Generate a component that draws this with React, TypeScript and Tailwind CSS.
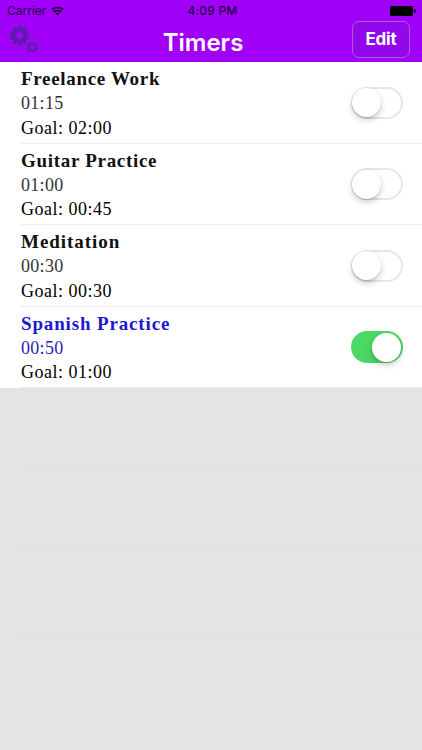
import React from "react";
import clsx from "clsx";

interface Timer {
  name: string;
  elapsed: string;
  goal: string;
  running: boolean;
  tracking: string;
}

const timers: Timer[] = [
  { name: "Freelance Work", elapsed: "01:15", goal: "02:00", running: false, tracking: "tracking-[0.68px]" },
  { name: "Guitar Practice", elapsed: "01:00", goal: "00:45", running: false, tracking: "tracking-[0.7px]" },
  { name: "Meditation", elapsed: "00:30", goal: "00:30", running: false, tracking: "tracking-[0.95px]" },
  { name: "Spanish Practice", elapsed: "00:50", goal: "01:00", running: true, tracking: "tracking-[0.85px]" },
];

// Toothed outline followed by the round hole, meant for the evenodd fill rule
const gearPath = (cx: number, cy: number, outer: number, inner: number, hole: number, teeth: number) => {
  const step = (Math.PI * 2) / teeth;
  const points: string[] = [];
  for (let i = 0; i < teeth; i++) {
    const mid = i * step - Math.PI / 2;
    [
      [inner, -0.32],
      [outer, -0.2],
      [outer, 0.2],
      [inner, 0.32],
    ].forEach(([r, offset]) => {
      const angle = mid + offset * step;
      points.push(`${(cx + r * Math.cos(angle)).toFixed(2)} ${(cy + r * Math.sin(angle)).toFixed(2)}`);
    });
  }
  return `M${points.join("L")}ZM${cx - hole} ${cy}a${hole} ${hole} 0 1 0 ${hole * 2} 0a${hole} ${hole} 0 1 0 ${-hole * 2} 0Z`;
};

const GearsIcon = () => (
  <svg width="32" height="32" viewBox="0 0 32 32" fill="#6415b3" stroke="#8a30c8" strokeWidth="0.35" fillRule="evenodd">
    <path d={gearPath(11.5, 11.5, 10.8, 8.3, 3.2, 10)} />
    <path d={gearPath(24.3, 23.3, 6.3, 4.9, 2, 10)} />
  </svg>
);

const WifiIcon = () => (
  <svg width="13" height="10" viewBox="0 0 13 10" fill="none" stroke="#24003d" strokeWidth="1.8">
    <path d="M0.8 3.7a8.2 8.2 0 0 1 11.4 0" />
    <path d="M2.8 6a5.3 5.3 0 0 1 7.4 0" />
    <path d="M6.5 9.6L4.4 7.5a3 3 0 0 1 4.2 0Z" fill="#24003d" stroke="none" />
  </svg>
);

const Toggle = ({ on }: { on: boolean }) => (
  <div
    className={clsx(
      "mt-px flex h-8 w-[52px] items-center rounded-full",
      on ? "justify-end bg-[#4bd864] px-[2px]" : "border-2 border-[#e6e6e6] bg-white"
    )}
  >
    <div
      className={clsx(
        "size-[29px] shrink-0 rounded-full bg-white",
        on ? "shadow-[0_3px_6px_rgba(0,0,0,0.22)]" : "-ml-px shadow-[0_3px_6px_rgba(0,0,0,0.2),0_1px_1px_rgba(0,0,0,0.14)]"
      )}
    />
  </div>
);

const TimerRow = ({ timer }: { timer: Timer }) => (
  <li className="h-[81.5px] bg-white pl-[21px]">
    <div className="flex h-full items-center justify-between border-b border-[#ececec] pr-[19px]">
      <div className="h-full pt-[5px] font-['Liberation_Serif',serif] text-[18px] leading-[24.3px] text-[#111]">
        <h2 className={clsx("text-[19px] font-bold", timer.tracking, timer.running && "text-[#2018d0]")}>{timer.name}</h2>
        <p className={clsx("tracking-[0.3px]", timer.running ? "text-[#2b22b8]" : "text-[#333]")}>{timer.elapsed}</p>
        <p className="tracking-[0.5px] text-black">Goal: {timer.goal}</p>
      </div>
      <Toggle on={timer.running} />
    </div>
  </li>
);

export default function App() {
  return (
    <div className="h-[750px] w-[422px] overflow-hidden bg-[#e4e4e4] font-['Inter','Liberation_Sans',sans-serif]">
      <header className="h-[62px] bg-[#a000f8]">
        <div className="grid h-[22px] grid-cols-3 items-center pl-[7px] pr-[6px] text-[12px] text-[#24003d]">
          <div className="flex items-center gap-[5px]">
            <span>Carrier</span>
            <WifiIcon />
          </div>
          <span className="pl-[2px] text-center font-medium tracking-[0.2px]">4:09 PM</span>
          <div className="flex items-center justify-end">
            <div className="h-[10px] w-[23px] rounded-[1.5px] bg-black" />
            <div className="ml-px h-[4px] w-[1.5px] rounded-r-full bg-black" />
          </div>
        </div>
        <div className="grid h-[40px] grid-cols-3 pl-[8px] pr-[12px]">
          <div className="pt-[2px]">
            <GearsIcon />
          </div>
          <h1 className="pr-[12px] text-center text-[24px] font-semibold leading-[41px] text-white">Timers</h1>
          <button className="-mt-px h-[37px] w-[58px] justify-self-end rounded-[7px] border-[1.5px] border-[#ad5cdb] bg-[#9208ea] text-[17px] font-bold tracking-[-0.2px] text-white">
            Edit
          </button>
        </div>
      </header>

      <ul>
        {timers.map((timer) => (
          <TimerRow key={timer.name} timer={timer} />
        ))}
      </ul>
      <div className="pl-[21px]">
        {[0, 1, 2].map((i) => (
          <div key={i} className="h-[81.5px] border-b border-[#dfdfdf]" />
        ))}
      </div>
    </div>
  );
}
